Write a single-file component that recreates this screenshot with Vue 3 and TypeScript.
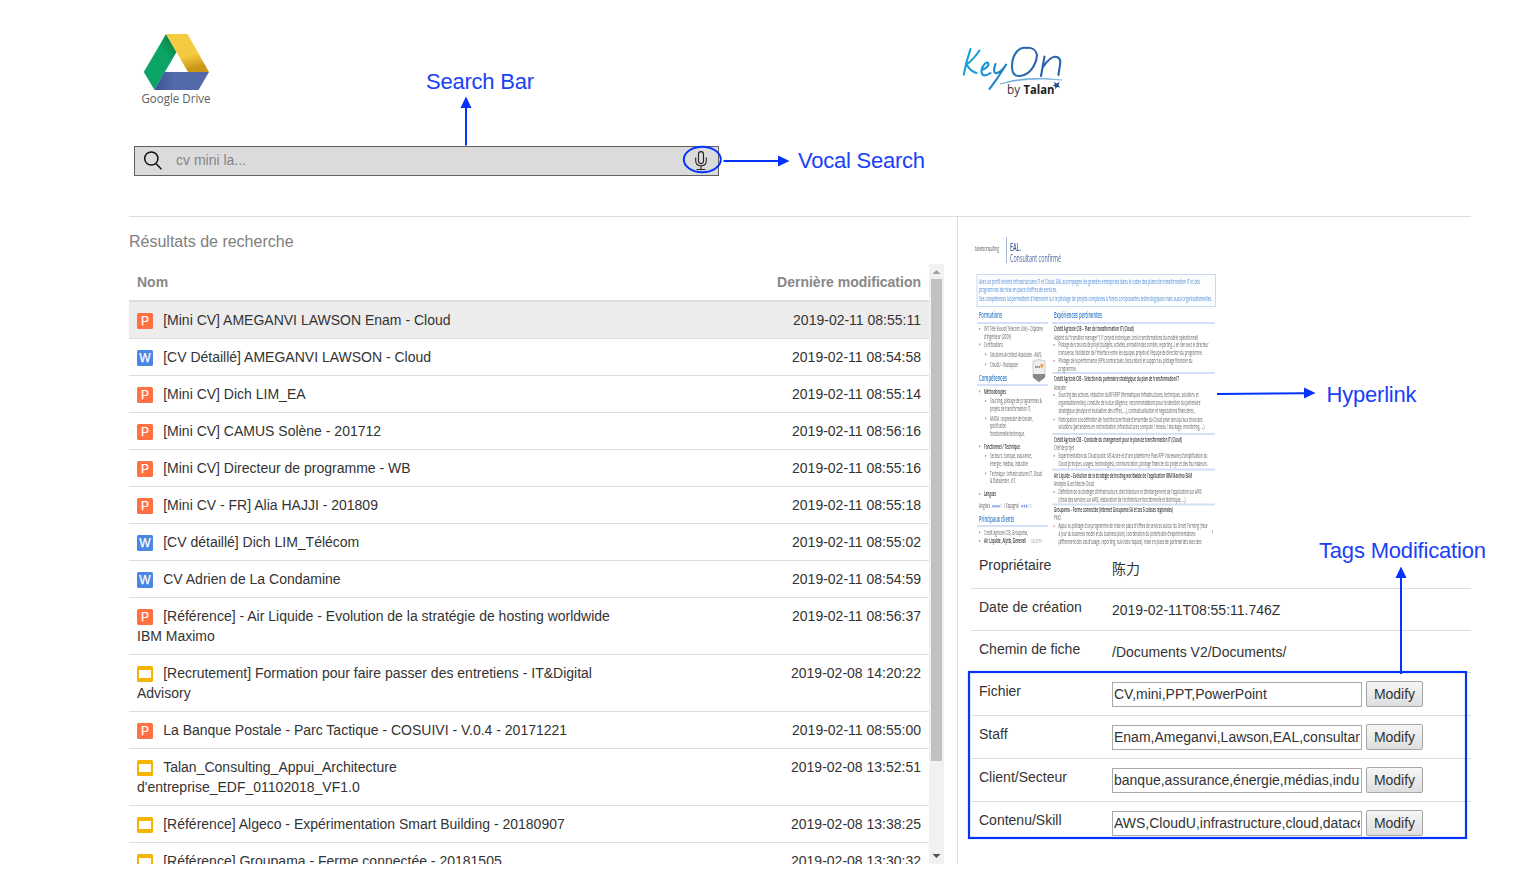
<script setup lang="ts">
type Kind = 'P' | 'W' | 'S'
interface Row { kind: Kind; name: string; date: string }
interface Line { x: number; y: number; w: number; t: string; c?: string; b?: boolean; s?: number; dot?: boolean }

const rows: Row[] = [
  { kind: 'P', name: '[Mini CV] AMEGANVI LAWSON Enam - Cloud', date: '2019-02-11 08:55:11' },
  { kind: 'W', name: '[CV Détaillé] AMEGANVI LAWSON - Cloud', date: '2019-02-11 08:54:58' },
  { kind: 'P', name: '[Mini CV] Dich LIM_EA', date: '2019-02-11 08:55:14' },
  { kind: 'P', name: '[Mini CV] CAMUS Solène - 201712', date: '2019-02-11 08:56:16' },
  { kind: 'P', name: '[Mini CV] Directeur de programme - WB', date: '2019-02-11 08:55:16' },
  { kind: 'P', name: '[Mini CV - FR] Alia HAJJI - 201809', date: '2019-02-11 08:55:18' },
  { kind: 'W', name: '[CV détaillé] Dich LIM_Télécom', date: '2019-02-11 08:55:02' },
  { kind: 'W', name: 'CV Adrien de La Condamine', date: '2019-02-11 08:54:59' },
  { kind: 'P', name: '[Référence] - Air Liquide - Evolution de la stratégie de hosting worldwide IBM Maximo', date: '2019-02-11 08:56:37' },
  { kind: 'S', name: '[Recrutement] Formation pour faire passer des entretiens - IT&Digital Advisory', date: '2019-02-08 14:20:22' },
  { kind: 'P', name: 'La Banque Postale - Parc Tactique - COSUIVI - V.0.4 - 20171221', date: '2019-02-11 08:55:00' },
  { kind: 'S', name: "Talan_Consulting_Appui_Architecture d'entreprise_EDF_01102018_VF1.0", date: '2019-02-08 13:52:51' },
  { kind: 'S', name: '[Référence] Algeco - Expérimentation Smart Building - 20180907', date: '2019-02-08 13:38:25' },
  { kind: 'S', name: '[Référence] Groupama - Ferme connectée - 20181505', date: '2019-02-08 13:30:32' },
]

const facts = [
  { label: 'Propriétaire', value: '陈力' },
  { label: 'Date de création', value: '2019-02-11T08:55:11.746Z' },
  { label: 'Chemin de fiche', value: '/Documents V2/Documents/' },
]

const tags = [
  { label: 'Fichier', value: 'CV,mini,PPT,PowerPoint' },
  { label: 'Staff', value: 'Enam,Ameganvi,Lawson,EAL,consultant' },
  { label: 'Client/Secteur', value: 'banque,assurance,énergie,médias,industrie' },
  { label: 'Contenu/Skill', value: 'AWS,CloudU,infrastructure,cloud,datacenter' },
]

const blue = '#2f7ac4'
const sky = '#4f8cd4'
const lines: Line[] = [
  { x: 975, y: 251, w: 24, t: 'talanconsulting', c: '#555', s: 8 },
  { x: 1010, y: 250.5, w: 11, t: 'EAL.', c: '#3a5aa0', b: true, s: 11 },
  { x: 1010, y: 262, w: 51, t: 'Consultant confirmé', c: '#4c659d', s: 11 },
  { x: 979, y: 283.5, w: 221, t: 'Avec un profil orienté Infrastructures IT et Cloud, EAL accompagne les grandes entreprises dans le cadre des plans de transformation IT et des', c: sky },
  { x: 979, y: 292, w: 78, t: "programmes de mise en place d'offres de services.", c: sky },
  { x: 979, y: 300.5, w: 233, t: "Ses compétences lui permettent d'intervenir sur le pilotage de projets complexes à fortes composantes technologiques mais aussi organisationnelles.", c: sky },
  { x: 979, y: 318, w: 23, t: 'Formations', c: blue, b: true, s: 8.5 },
  { x: 984, y: 331, w: 59, t: 'INT Télé Evaud (Telecom Lille) – Diplôme', dot: true },
  { x: 984, y: 339, w: 27, t: "d'Ingénieur (2009)" },
  { x: 984, y: 346.5, w: 19, t: 'Certifications', dot: true },
  { x: 990, y: 356.5, w: 52, t: 'Solutions Architect Associate - AWS,', dot: true },
  { x: 990, y: 366.5, w: 28, t: 'CloudU - Rackspace', dot: true },
  { x: 979, y: 380.5, w: 28, t: 'Compétences', c: blue, b: true, s: 8.5 },
  { x: 984, y: 393.5, w: 22, t: 'Méthodologies', b: true, dot: true },
  { x: 990, y: 403, w: 52, t: 'Sourcing, pilotage de programmes &', dot: true },
  { x: 990, y: 411, w: 41, t: 'projets de transformation IT,' },
  { x: 990, y: 420.5, w: 43, t: 'AMOA : expression de besoin,', dot: true },
  { x: 990, y: 428, w: 16, t: 'spécification' },
  { x: 990, y: 436, w: 35, t: 'fonctionnelle/technique.' },
  { x: 984, y: 448.5, w: 36, t: 'Fonctionnel / Technique', b: true, dot: true },
  { x: 990, y: 458, w: 42, t: 'Secteurs : banque, assurance,', dot: true },
  { x: 990, y: 466, w: 38, t: 'énergie, médias, industrie' },
  { x: 990, y: 475.5, w: 52, t: 'Technique : infrastructures IT, Cloud', dot: true },
  { x: 990, y: 483, w: 26, t: '& Datacenter, IoT.' },
  { x: 984, y: 496, w: 12, t: 'Langues', b: true, dot: true },
  { x: 979, y: 508, w: 11, t: 'Anglais' },
  { x: 992, y: 508, w: 10, t: '●●●●○', c: '#6f9ae0' },
  { x: 1004, y: 508, w: 15, t: '/ Espagnol' },
  { x: 1021, y: 508, w: 11, t: '●●●○○', c: '#6f9ae0' },
  { x: 979, y: 522, w: 35, t: 'Principaux clients', c: blue, b: true, s: 8.5 },
  { x: 984, y: 534.5, w: 44, t: 'Crédit Agricole CIB, Groupama,', dot: true },
  { x: 984, y: 543, w: 42, t: 'Air Liquide, Alptis, Generali', b: true, dot: true },
  { x: 1031, y: 543, w: 11, t: '02/2019', c: '#999', s: 5.5 },
  { x: 1054, y: 318.3, w: 48, t: 'Expériences pertinentes', c: blue, b: true, s: 8.5 },
  { x: 1054, y: 331, w: 80, t: 'Crédit Agricole CIB – Plan de transformation IT (Cloud)', b: true },
  { x: 1054, y: 339.5, w: 144, t: "Adjoint du “transition manager” (11 projets techniques, trois transformations du modèle opérationnel)" },
  { x: 1058.5, y: 347, w: 150, t: 'Pilotage de trois lots de projet (budgets, activités, animation des comités, reporting…) en lien avec le directeur', dot: true },
  { x: 1058.5, y: 355, w: 144, t: "transverse, facilitation de l'interface entre les équipes projets et l'équipe de direction du programme." },
  { x: 1058.5, y: 363, w: 134, t: 'Pilotage de la performance (KPIs contractuels, facturation) et support au pilotage financier du', dot: true },
  { x: 1058.5, y: 371, w: 18, t: 'programme.' },
  { x: 1054, y: 381, w: 125, t: 'Crédit Agricole CIB – Sélection du partenaire stratégique du plan de transformation IT', b: true },
  { x: 1054, y: 389.5, w: 12, t: 'Analyste' },
  { x: 1058.5, y: 397, w: 140, t: 'Sourcing des acteurs, rédaction du RFI/RFP (thématiques infrastructures, techniques, solutions et', dot: true },
  { x: 1058.5, y: 405, w: 142, t: 'organisationnelles), conduite de la due diligence, recommandations pour la sélection du partenaire' },
  { x: 1058.5, y: 413, w: 136, t: 'stratégique (analyse et évaluation des offres, …), contractualisation et négociations financières,' },
  { x: 1058.5, y: 421.5, w: 144, t: "Participation à la définition de l'architecture finale d'ensemble du Cloud privé ainsi qu'aux choix des", dot: true },
  { x: 1058.5, y: 429, w: 146, t: 'solutions (partenaires en orchestration, infrastructures compute / réseau / stockage, monitoring, …)' },
  { x: 1054, y: 441.5, w: 128, t: 'Crédit Agricole CIB – Conduite du changement pour le plan de transformation IT (Cloud)', b: true },
  { x: 1054, y: 449.5, w: 20, t: 'Chef de projet' },
  { x: 1058.5, y: 458, w: 149, t: "Expérimentation du Cloud public MS Azure et d'une plateforme Paas RFP Voiceware) d'amplification du", dot: true },
  { x: 1058.5, y: 466, w: 149, t: 'Cloud (principes, usages, technologies), communication, pilotage financier du projet et des fournisseurs.' },
  { x: 1054, y: 478, w: 138, t: "Air Liquide – Evolution de la stratégie de hosting worldwide de l'application IBM Maximo EAM", b: true },
  { x: 1054, y: 486, w: 40, t: 'Analyste & architecte Cloud' },
  { x: 1058.5, y: 494, w: 143, t: "Définition de la stratégie d'infrastructure, d'architecture et d'hébergement de l'application sur AWS", dot: true },
  { x: 1058.5, y: 502.3, w: 127, t: "(choix des services sur AWS, élaboration de l'architecture fonctionnelle et technique, …)" },
  { x: 1054, y: 512.3, w: 119, t: 'Groupama – Ferme connectée (Internet Groupama SA et ses 5 caisses régionales)', b: true },
  { x: 1054, y: 520.3, w: 7, t: 'PMO' },
  { x: 1058.5, y: 528.3, w: 149, t: "Appui au pilotage d'un programme de mise en place d'offres de services autour du Smart Farming (mise", dot: true },
  { x: 1058.5, y: 536.3, w: 137, t: "à jour du business model et du business plan), coordination du portefeuille d'expérimentations" },
  { x: 1058.5, y: 544, w: 143, t: "(affinement des cas d'usage, reporting, suivi des risques), mise en place de partenariats avec des" },
]
const bars: [number, number, number][] = [
  [977, 322, 71], [1052, 322, 163], [1052, 372, 163], [977, 384, 71],
  [1052, 433, 163], [1052, 468.5, 163], [1052, 503.5, 163], [977, 525, 71],
]
</script>

<template>
  <div class="page">
    <header class="top">
      <div class="logos">
        <svg class="drive" width="82" height="80" viewBox="136 30 82 80">
          <defs>
            <linearGradient id="gy" x1="0" y1="0" x2="0.25" y2="1"><stop offset=".65" stop-color="#f4cb40" /><stop offset="1" stop-color="#cb9518" /></linearGradient>
            <linearGradient id="gg" x1="1" y1="0" x2="0.5" y2=".6"><stop offset=".1" stop-color="#087b3a" /><stop offset=".65" stop-color="#0da565" /></linearGradient>
            <linearGradient id="gb" x1="0" y1="0" x2="1" y2="0"><stop offset="0" stop-color="#3d5091" /><stop offset=".35" stop-color="#5269ab" /></linearGradient>
          </defs>
          <path d="M166 34L176.500 52L154.500 90L143.800 72Z" fill="url(#gg)" />
          <path d="M166 34H187.500L209 72H188Z" fill="url(#gy)" />
          <path d="M164.500 72H209L198.500 90H154.500Z" fill="url(#gb)" />
          <text x="141.500" y="103.300" textLength="69" lengthAdjust="spacingAndGlyphs" class="drive-label">Google Drive</text>
        </svg>
        <svg class="keyon" width="112" height="60" viewBox="956 42 112 60">
          <defs>
            <linearGradient id="gk" gradientUnits="userSpaceOnUse" x1="962" y1="0" x2="1062" y2="0"><stop offset=".15" stop-color="#16a0dc" /><stop offset=".65" stop-color="#2a62ac" /><stop offset="1" stop-color="#2a62ae" /></linearGradient>
          </defs>
          <g fill="none" stroke="url(#gk)" stroke-width="2.100" stroke-linecap="round">
            <path d="M970.500 49Q966 62 963.800 74.500M979.500 50.500Q973 60 966.500 64.500M967 65Q970 71 976.500 73" />
            <path d="M981.500 70Q988 68 988.500 64C987.500 60 982 65 981.500 71C981.500 77 986 76 990.500 73" />
            <path d="M995.500 64C993 70 994 74 997 73C1001 72 1004 68 1006.500 64Q998 78 989.500 89" />
            <path d="M1027 48C1018 46 1012 56 1012 66C1012 77 1018 77 1024 75C1032 72 1037 62 1037 55C1036 50 1032 47 1026 48" />
            <path d="M1044.500 56.500L1041 76M1043 67Q1051 55 1057 57C1063 59 1059 67 1058.500 75" />
          </g>
          <path d="M1000 84Q1026 75 1062 80Q1026 77 1000 84Z" fill="#4b9ad1" stroke="#65a9d8" stroke-width=".6" />
          <text x="1007" y="94" class="by" textLength="13" lengthAdjust="spacingAndGlyphs">by</text>
          <text x="1023.500" y="94" class="talan" textLength="31" lengthAdjust="spacingAndGlyphs">Talan</text>
          <path d="M1053.500 81.500L1056.500 83.500L1059.500 82L1058.500 85L1060 87.500L1057 87L1055.500 89.500L1055 86.500L1052.500 85.500L1055 84.500Z" fill="#244a92" />
        </svg>
      </div>
      <div class="search">
        <svg width="20" height="20" viewBox="0 0 20 20" fill="none" stroke="#111" stroke-width="1.500"><circle cx="8.300" cy="7.500" r="6.600" /><path d="M12.900 12.500L18.400 18.200" /></svg>
        <span class="placeholder">cv mini la...</span>
        <svg class="mic" width="14" height="20" viewBox="0 0 14 20" fill="none" stroke="#222" stroke-width="1.100"><rect x="4.500" y=".6" width="5" height="12" rx="2.500" /><path d="M1.700 6.500V9.500Q1.700 14.800 7 14.800T12.300 9.500V6.500M7 15V18M2.500 18.500H11.500" /></svg>
      </div>
    </header>

    <main class="body">
      <section class="results">
        <h2>Résultats de recherche</h2>
        <div class="scroller">
          <div class="list">
            <div class="row head"><span class="name">Nom</span><span>Dernière modification</span></div>
            <div v-for="(r, i) in rows" :key="r.name" class="row" :class="{ selected: i === 0 }">
              <span class="name">
                <svg class="icon" width="16" height="16" viewBox="0 0 16 16">
                  <rect width="16" height="16" rx="1.500" :fill="r.kind === 'P' ? '#ff7143' : r.kind === 'W' ? '#4a86e4' : '#f4b400'" />
                  <rect v-if="r.kind === 'S'" x="2" y="4" width="12" height="8" fill="#fff" />
                  <text v-else x="8" y="12.300" text-anchor="middle" class="letter">{{ r.kind }}</text>
                </svg>{{ r.name }}</span>
              <span>{{ r.date }}</span>
            </div>
          </div>
          <div class="bar">
            <svg width="15" height="15" viewBox="0 0 15 15"><path d="M3.500 10L7.500 6L11.500 10Z" fill="#a0a0a0" /></svg>
            <div class="thumb"></div>
            <svg width="15" height="15" viewBox="0 0 15 15"><path d="M3.500 5L7.500 9L11.500 5Z" fill="#505050" /></svg>
          </div>
        </div>
      </section>

      <aside class="detail">
        <svg class="doc" width="250" height="315" viewBox="971 232 250 315">
          <path d="M1006.500 237V263" stroke="#a9b6d6" stroke-width="1" />
          <rect x="977" y="274.500" width="238.500" height="32" fill="#fbfdff" stroke="#c9daf7" />
          <rect v-for="(b, i) in bars" :key="i" :x="b[0]" :y="b[1]" :width="b[2]" height="2" fill="#d3e0f6" />
          <template v-for="(l, i) in lines" :key="i">
            <rect v-if="l.dot" :x="l.x - 5" :y="l.y - 3" width="1.200" height="1.800" fill="#c88497" />
            <text :x="l.x" :y="l.y" :textLength="l.w" lengthAdjust="spacingAndGlyphs" :fill="l.c ?? (l.b ? '#333' : '#606060')" :font-size="l.s ?? 7" :font-weight="l.b ? 600 : 400">{{ l.t }}</text>
          </template>
          <path d="M1033 361Q1039 358 1045 361V377L1039 382L1033 377Z" fill="#eee" stroke="#bbb" stroke-width=".7" />
          <path d="M1033 374H1045V377.500L1039 382L1033 377.500Z" fill="#888" />
          <text x="1035" y="368" font-size="4" font-weight="700" fill="#666" textLength="5" lengthAdjust="spacingAndGlyphs">aws</text>
          <rect x="1040.500" y="364" width="2.500" height="3.500" fill="#f29a38" />
          <text x="1211" y="534" font-size="5" fill="#888">1</text>
        </svg>
        <div v-for="f in facts" :key="f.label" class="fact">
          <span class="label">{{ f.label }}</span><span class="value">{{ f.value }}</span>
        </div>
        <div v-for="t in tags" :key="t.label" class="fact tag">
          <span class="label">{{ t.label }}</span>
          <div class="input"><span>{{ t.value }}</span></div>
          <button type="button">Modify</button>
        </div>
      </aside>
    </main>

    <svg class="notes" width="1526" height="892" viewBox="0 0 1526 892">
      <g fill="none" stroke="#0433ff" stroke-width="2">
        <path d="M466 145.500V106M723.500 161H780M1217 394L1306 393.200M1401 674V576" />
        <ellipse cx="702.300" cy="159.500" rx="18.500" ry="12.700" />
        <rect x="969" y="672" width="497" height="166" stroke-width="2.200" />
      </g>
      <path d="M466 96.500L471.500 108H460.500ZM789.500 161L778 166.500V155.500ZM1315.500 393L1304 398.600V387.600ZM1401 566.500L1406.500 578H1395.500Z" fill="#0433ff" />
      <g class="note">
        <text x="426" y="89" textLength="108">Search Bar</text>
        <text x="798" y="168" textLength="127">Vocal Search</text>
        <text x="1326.500" y="402" textLength="90">Hyperlink</text>
        <text x="1319" y="558" textLength="167">Tags Modification</text>
      </g>
    </svg>
  </div>
</template>

<style>
body { margin: 0; background: #fff; }
</style>

<style scoped>
.page { position: relative; box-sizing: border-box; width: 1526px; height: 892px; padding: 0 55px 28px 129px; overflow: hidden; font: 14px/20px "Liberation Sans", "Noto Sans CJK SC", sans-serif; color: #333; }
.page * { box-sizing: border-box; }
.page svg { flex: none; }
.top { height: 217px; border-bottom: 1px solid #ddd; padding: 30px 0 0 5px; }
.logos { height: 116px; display: flex; align-items: flex-start; }
.drive { margin-left: 2px; }
.keyon { margin: 12px 0 0 738px; }
.drive-label { font: 12px "Open Sans", sans-serif; fill: #606060; }
.by { font: 13px "Open Sans", sans-serif; fill: #333; }
.talan { font: 700 13px "Open Sans", sans-serif; fill: #222; }
.search { width: 585px; height: 30px; border: 1px solid #606060; background: #dbdbdb; display: flex; align-items: center; padding: 0 10px 0 8px; }
.placeholder { flex: 1; margin: -3px 0 0 13px; color: #858585; }
.body { display: flex; height: 647px; }
.results { width: 829px; border-right: 1px solid #ddd; flex: none; }
h2 { margin: 0; height: 47px; padding-top: 14px; font-size: 16px; line-height: 22px; font-weight: 400; color: #808080; }
.scroller { display: flex; width: 815px; height: 600px; overflow: hidden; }
.list { width: 800px; }
.row { display: flex; justify-content: space-between; padding: 8px; border-top: 1px solid #ddd; }
.name { width: 481px; }
.head { border-top: 0; border-bottom: 2px solid #ddd; font-weight: 700; color: #888; }
.selected { border-top: 0; background: #ececec; }
.icon { vertical-align: -4px; margin-right: 10.2px; }
.letter { font: 12px "Liberation Sans", sans-serif; fill: #fff; stroke: #fff; stroke-width: .25px; }
.bar { width: 15px; height: 600px; display: flex; flex-direction: column; background: #f1f1f1; }
.thumb { width: 11px; height: 482px; margin: 0 2px 88px; background: #c1c1c1; }
.detail { width: 513px; padding: 15px 0 0 13px; }
.doc { display: block; font-family: "Open Sans", sans-serif; filter: blur(.35px); }
.fact { display: flex; height: 42px; border-top: 1px solid #ddd; padding: 8px; }
.doc + .fact { height: 41px; border-top: 0; }
.doc + .fact .value { margin-top: 4px; }
.label { width: 133px; }
.value { margin-top: 3px; }
.tag { height: 43px; }
.input { width: 250px; height: 25px; margin: 1px 4px 0 0; padding: 0 1px; border: 1px solid #a9a9a9; line-height: 23px; }
.input span { display: block; overflow: hidden; white-space: nowrap; }
button { width: 57px; height: 26px; padding: 0; border: 1px solid #a6a6a6; border-radius: 2px; background: linear-gradient(#f6f6f6, #dedede); color: #333; font: inherit; }
.notes { position: absolute; left: 0; top: 0; pointer-events: none; }
.note { font: 22px "Liberation Sans", Arial, sans-serif; fill: #1a41f5; }
</style>
